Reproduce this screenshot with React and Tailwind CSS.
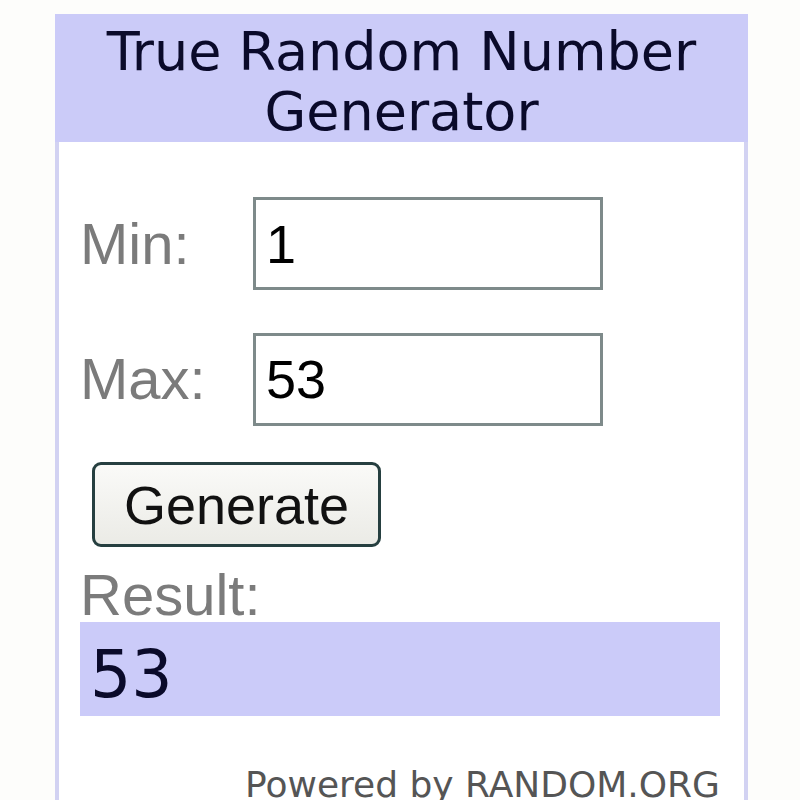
export default function App() {
    const label = "w-[173px] shrink-0 text-[58px] leading-none text-[#7b7b7b] font-['Liberation_Sans',Arial,sans-serif]";
    const box = "w-[350px] h-[93px] border-[3px] border-[#7e8a8a] bg-white pl-[10px] text-[54px] text-black font-['Liberation_Sans',Arial,sans-serif] outline-none";

    return (
        <div className="min-h-[800px] bg-[#fdfdfb] pt-[14px] pl-[55px] overflow-hidden">
            <div className="w-[693px] h-[800px] border-x-4 border-[#d2d2f2] bg-white">
                {/* Title */}
                <div className="-mx-1 h-[128px] bg-[#cbcbf8] pt-[8px] text-center text-[54px] leading-[60px] text-[#0a0a2a] font-['DejaVu_Sans',Verdana,sans-serif]">
                    True Random Number
                    <br />
                    Generator
                </div>

                <div className="pl-[21px] pt-[55px]">
                    <div className="flex items-center h-[93px]">
                        <span className={label}>Min:</span>
                        <input readOnly value="1" className={box} />
                    </div>
                    <div className="flex items-center h-[92px] mt-[43px]">
                        <span className={label}>Max:</span>
                        <input readOnly value="53" className={box} />
                    </div>

                    <button className="ml-[12px] mt-[37px] w-[289px] h-[85px] rounded-[9px] border-[3px] border-[#263f40] bg-gradient-to-b from-[#fafaf8] to-[#ebebe6] text-[54px] leading-none text-[#111] font-['Liberation_Sans',Arial,sans-serif]">
                        Generate
                    </button>

                    <div className="mt-[22px] text-[58px] leading-[52px] text-[#7b7b7b] font-['Liberation_Sans',Arial,sans-serif]">
                        Result:
                    </div>
                    <div className="mt-[1px] w-[640px] h-[94px] bg-[#cbcbf9] pl-[10px] pt-[20px] text-[65px] leading-[65px] text-[#0a0a2a] font-['DejaVu_Sans',Verdana,sans-serif]">
                        53
                    </div>

                    <div className="mt-[51px] w-[640px] text-right text-[36px] leading-[35px] text-[#555] font-['DejaVu_Sans',Verdana,sans-serif]">
                        Powered by RANDOM.ORG
                    </div>
                </div>
            </div>
        </div>
    );
}
